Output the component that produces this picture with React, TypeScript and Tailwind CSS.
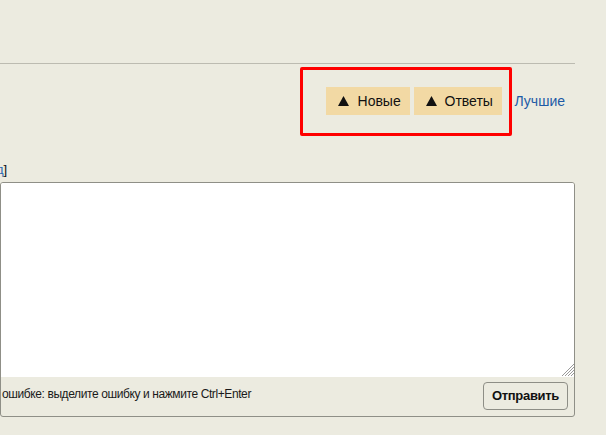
import React from "react";

function Tri() {
  return (
    <svg width="11" height="10" viewBox="0 0 11 10" className="shrink-0">
      <polygon points="5.5,0 11,10 0,10" fill="#111" />
    </svg>
  );
}

export default function App() {
  return (
    <div
      className="relative w-[606px] h-[435px] overflow-hidden bg-[#ecebe0] text-[#111]"
      style={{ fontFamily: '"Liberation Sans", Arial, sans-serif' }}
    >
      <div className="w-[575px] flex flex-col">
        <div className="h-[64px] border-b border-[#bcbbb1]" />
        <div className="flex items-center justify-end mt-[23px] pr-[10px]">
          <div className="flex gap-[4px]">
            <button className="h-[28px] w-[84px] bg-[#f2d9a4] flex items-center pl-[12px] gap-[9px] text-[14px] text-[#111]">
              <Tri />
              <span>Новые</span>
            </button>
            <button className="h-[28px] w-[88px] bg-[#f2d9a4] flex items-center pl-[12px] gap-[8px] text-[14px] text-[#111]">
              <Tri />
              <span>Ответы</span>
            </button>
          </div>
          <a className="ml-[13px] text-[14px] text-[#1d5aa6]">Лучшие</a>
        </div>
        <div className="mt-[45px] h-[19px] text-[13px] leading-[19px] -ml-[4px]">
          <a className="text-[#2a66b0]">д</a>
          <span>]</span>
        </div>
        <div className="mt-[3px] h-[235px] border border-[#8f8f87] rounded-[3px] flex flex-col overflow-hidden">
          <div className="relative h-[194px] bg-white">
            <svg
              width="13"
              height="13"
              viewBox="0 0 13 13"
              className="absolute right-[0px] bottom-[1px]"
            >
              <g stroke="#9a9a9a" strokeWidth="1">
                <line x1="13" y1="1" x2="1" y2="13" />
                <line x1="13" y1="4" x2="4" y2="13" />
                <line x1="13" y1="7" x2="7" y2="13" />
                <line x1="13" y1="10" x2="10" y2="13" />
              </g>
            </svg>
          </div>
          <div className="flex-1 flex items-start justify-between pt-[5px] pr-[6px]">
            <span className="text-[12px] leading-[22px] mt-[1px] pl-[1px] tracking-[-0.4px] text-[#1a1a1a]">
              ошибке: выделите ошибку и нажмите Ctrl+Enter
            </span>
            <button className="h-[28px] w-[85px] border border-[#8e8e86] rounded-[4px] bg-[#ecebe0] text-[13px] font-bold tracking-[-0.3px] text-[#111]">
              Отправить
            </button>
          </div>
        </div>
      </div>
      <div className="absolute left-[300px] top-[67px] w-[212px] h-[69px] border-[3px] border-[#ff0000] rounded-[2px]" />
    </div>
  );
}
